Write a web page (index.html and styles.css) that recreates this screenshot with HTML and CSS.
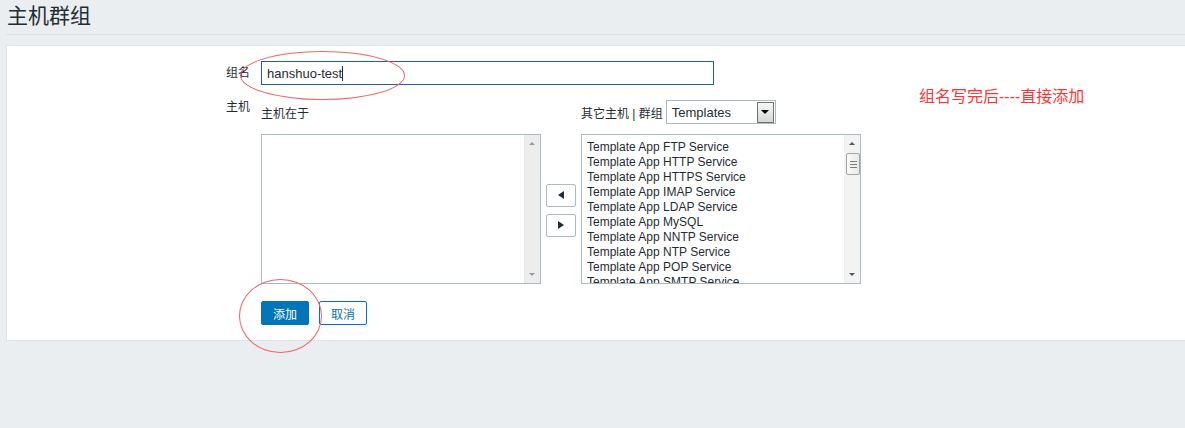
FILE: index.html
```html
<!DOCTYPE html>
<html lang="zh-CN">
<head>
<meta charset="utf-8">
<title>主机群组</title>
<link rel="stylesheet" href="styles.css">
</head>
<body>
<div class="page">
  <header class="header">
    <h1 class="title">主机群组</h1>
  </header>
  <section class="card">
    <form class="form">
      <label class="lbl">组名</label>
      <div class="field">
        <div class="input"><span>hanshuo-test</span><span class="caret"></span></div>
      </div>
      <label class="lbl lbl-top">主机</label>
      <div class="twin">
        <div class="twin-head">主机在于</div>
        <div></div>
        <div class="twin-head">
          <span>其它主机 | 群组</span>
          <div class="select">
            <span class="select-text">Templates</span>
            <span class="select-btn"><span class="tri-down"></span></span>
          </div>
        </div>
        <div class="listbox">
          <div class="list-items"></div>
          <div class="sbar sbar-flat">
            <span class="arr arr-up"></span>
            <span class="arr arr-down"></span>
          </div>
        </div>
        <div class="movers">
          <button type="button" class="mover"><span class="tri-left"></span></button>
          <button type="button" class="mover"><span class="tri-right"></span></button>
        </div>
        <div class="listbox">
          <div class="list-items">
            <div class="item">Template App FTP Service</div>
            <div class="item">Template App HTTP Service</div>
            <div class="item">Template App HTTPS Service</div>
            <div class="item">Template App IMAP Service</div>
            <div class="item">Template App LDAP Service</div>
            <div class="item">Template App MySQL</div>
            <div class="item">Template App NNTP Service</div>
            <div class="item">Template App NTP Service</div>
            <div class="item">Template App POP Service</div>
            <div class="item">Template App SMTP Service</div>
          </div>
          <div class="sbar">
            <span class="arr arr-up dark"></span>
            <span class="thumb"><i></i><i></i><i></i></span>
            <span class="arr arr-down dark"></span>
          </div>
        </div>
      </div>
      <div></div>
      <div class="actions">
        <button type="button" class="btn btn-primary">添加</button>
        <button type="button" class="btn btn-alt">取消</button>
      </div>
    </form>
    <div class="note">组名写完后----直接添加</div>
  </section>
  <div class="mark mark-name"></div>
  <div class="mark mark-add"></div>
</div>
</body>
</html>
```
FILE: styles.css
```css
* { box-sizing: border-box; }
html, body { margin: 0; padding: 0; }
body {
  background: #ebeef0;
  font-family: "Liberation Sans", "Noto Sans CJK SC", sans-serif;
  font-size: 12px;
  color: #1f2c33;
  overflow: hidden;
}
.page {
  position: relative;
  width: 1185px;
  height: 428px;
}
.header {
  margin-left: 6px;
  height: 35px;
  border-bottom: 1px solid #dde2e6;
  padding-left: 1px;
}
.title {
  margin: 0;
  font-size: 21px;
  font-weight: normal;
  line-height: 32px;
  color: #1f2c33;
}
.card {
  position: relative;
  margin: 10px 0 0 6px;
  background: #fff;
  border: 1px solid #dfe4e7;
  border-right: none;
  padding: 15px 0 15px 0;
}
.form {
  display: grid;
  grid-template-columns: 244px auto;
  column-gap: 10px;
  row-gap: 15px;
  justify-content: start;
}
.lbl {
  text-align: right;
  line-height: 24px;
  padding-right: 1px;
}
.lbl-top { line-height: 14px; }
.input {
  width: 453px;
  height: 24px;
  border: 1px solid #1f5f9a;
  padding-left: 5px;
  display: flex;
  align-items: center;
  font-size: 13px;
  color: #1f2c33;
}
.caret {
  display: inline-block;
  width: 1px;
  height: 15px;
  background: #1f2c33;
}
.twin {
  display: grid;
  grid-template-columns: 280px 30px 280px;
  grid-template-rows: 24px 150px;
  column-gap: 5px;
  row-gap: 10px;
}
.twin-head {
  display: flex;
  align-items: center;
  gap: 3px;
  white-space: nowrap;
}
.select {
  width: 110px;
  height: 24px;
  border: 1px solid #acb8c0;
  display: flex;
  align-items: center;
  justify-content: space-between;
  background: #fff;
}
.select-text {
  padding-left: 5px;
  font-size: 13px;
}
.select-btn {
  width: 17px;
  height: 21px;
  margin-right: 1px;
  border: 1px solid #6f6f6f;
  background: linear-gradient(#f7f7f7, #d6d6d6);
  display: flex;
  align-items: center;
  justify-content: center;
}
.tri-down {
  width: 0; height: 0;
  border-left: 4px solid transparent;
  border-right: 4px solid transparent;
  border-top: 4px solid #000;
}
.listbox {
  border: 1px solid #acbbc2;
  display: flex;
  height: 150px;
  overflow: hidden;
  background: #fff;
}
.list-items {
  flex: 1;
  padding: 5px 0 0 5px;
  overflow: hidden;
}
.item {
  line-height: 15px;
  white-space: nowrap;
}
.sbar {
  width: 16px;
  flex: none;
  position: relative;
  background: #f3f3f3;
  border-left: 1px solid #f0f0f0;
}
.sbar-flat { background: #ededed; border-left: 1px solid #e6e6e6; }
.arr {
  position: absolute;
  left: 4px;
  width: 0; height: 0;
  border-left: 3px solid transparent;
  border-right: 3px solid transparent;
}
.arr-up { top: 7px; border-bottom: 3px solid #9a9a9a; }
.arr-down { bottom: 7px; border-top: 3px solid #9a9a9a; }
.arr.dark.arr-up { border-bottom-color: #555; }
.arr.dark.arr-down { border-top-color: #555; }
.thumb {
  position: absolute;
  top: 18px;
  left: 1px;
  width: 14px;
  height: 22px;
  border: 1px solid #a2a2a2;
  border-radius: 2px;
  background: linear-gradient(90deg, #fbfbfb, #e8e8e8);
  display: flex;
  flex-direction: column;
  align-items: center;
  justify-content: center;
  gap: 2px;
}
.thumb i {
  display: block;
  width: 7px;
  height: 1px;
  background: #7a7a7a;
}
.movers {
  display: flex;
  flex-direction: column;
  justify-content: center;
  gap: 7px;
  padding-top: 2px;
}
.mover {
  width: 30px;
  height: 23px;
  padding: 0;
  border: 1px solid #acbbc2;
  border-radius: 2px;
  background: #fff;
  display: flex;
  align-items: center;
  justify-content: center;
}
.tri-left {
  width: 0; height: 0;
  border-top: 4px solid transparent;
  border-bottom: 4px solid transparent;
  border-right: 6px solid #1f2c33;
}
.tri-right {
  width: 0; height: 0;
  border-top: 4px solid transparent;
  border-bottom: 4px solid transparent;
  border-left: 6px solid #1f2c33;
}
.actions {
  display: flex;
  gap: 10px;
  margin-top: 2px;
}
.btn {
  width: 48px;
  height: 24px;
  padding: 0;
  border-radius: 2px;
  font-family: "Liberation Sans", "Noto Sans CJK SC", sans-serif;
  font-size: 12px;
  cursor: pointer;
}
.btn-primary {
  background: #0275b8;
  border: 1px solid #0275b8;
  color: #fff;
}
.btn-alt {
  background: #fff;
  border: 1px solid #0275b8;
  color: #0275b8;
}
.note {
  position: absolute;
  left: 912px;
  top: 41px;
  font-size: 16px;
  line-height: 20px;
  color: #ff3333;
  font-family: "Liberation Sans", "Noto Sans CJK SC", sans-serif;
}
.mark {
  position: absolute;
  border: 1px solid #f06464;
  border-radius: 50%;
}
.mark-name {
  left: 240px;
  top: 51px;
  width: 165px;
  height: 49px;
}
.mark-add {
  left: 239px;
  top: 279px;
  width: 83px;
  height: 74px;
}
```
